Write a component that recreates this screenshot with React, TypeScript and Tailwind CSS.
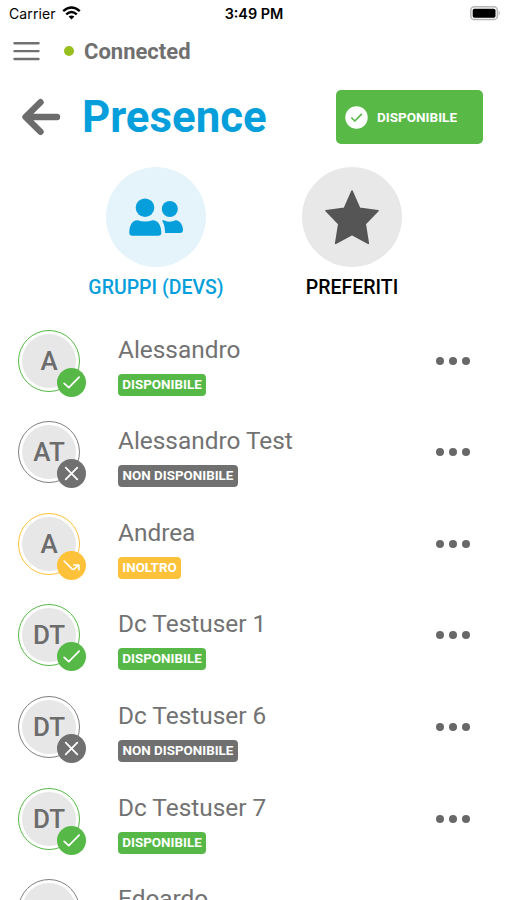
import type { ReactNode } from "react";

type Status = "available" | "unavailable" | "forward";

const contacts: { name: string; initials: string; status: Status }[] = [
  { name: "Alessandro", initials: "A", status: "available" },
  { name: "Alessandro Test", initials: "AT", status: "unavailable" },
  { name: "Andrea", initials: "A", status: "forward" },
  { name: "Dc Testuser 1", initials: "DT", status: "available" },
  { name: "Dc Testuser 6", initials: "DT", status: "unavailable" },
  { name: "Dc Testuser 7", initials: "DT", status: "available" },
  { name: "Edoardo", initials: "E", status: "unavailable" },
];

const statuses: Record<Status, { label: string; bg: string; ring: string; width: string; icon: ReactNode }> = {
  available: {
    label: "DISPONIBILE",
    bg: "bg-[#56b947]",
    ring: "border-[#56b947]",
    width: "w-[88px]",
    icon: <path d="M7.3 15.6 12 20 22.5 9.4" />,
  },
  unavailable: {
    label: "NON DISPONIBILE",
    bg: "bg-[#707070]",
    ring: "border-[#808080]",
    width: "w-[120px]",
    icon: <path d="M8.9 8.9 20.6 20.6M20.6 8.9 8.9 20.6" />,
  },
  forward: {
    label: "INOLTRO",
    bg: "bg-[#fdc13a]",
    ring: "border-[#fdc13a]",
    width: "w-[63px]",
    icon: <path d="M7.2 10.2 15.3 18.2Q16.5 19.3 17.7 18.2L22 14.3M17 14.2H22.3V19.2" strokeWidth="1.6" />,
  },
};

function StatusBar() {
  return (
    <div className="grid h-[27px] grid-cols-3 items-center pl-[9px] pr-[8px] text-black">
      <div className="flex items-center gap-[6px]">
        <span className="font-['Inter',sans-serif] text-[14px] tracking-[0.1px]">Carrier</span>
        <svg className="-mt-[2px]" width="19" height="14" viewBox="0 0 19 14" fill="none" stroke="#000" strokeWidth="2.4">
          <path d="M1.2 5.1Q9.5-2.2 17.8 5.1" />
          <path d="M4.2 8.3Q9.5 3.6 14.8 8.3" />
          <path d="M6.6 10.6Q9.5 8.4 12.4 10.6L9.5 13.5Z" fill="#000" stroke="none" />
        </svg>
      </div>
      <span className="text-center font-['Inter',sans-serif] text-[14.4px] font-semibold">3:49 PM</span>
      <svg className="justify-self-end -mr-[2px]" width="31" height="15" viewBox="0 0 31 15">
        <rect x="0.8" y="0.8" width="26.6" height="12.8" rx="3.6" fill="#fff" stroke="#b5b5b5" strokeWidth="1.5" />
        <rect x="2.7" y="2.7" width="22.8" height="9" rx="1.7" fill="#000" />
        <path d="M28.8 5q2 2.2 0 4.4z" fill="#aaa" />
      </svg>
    </div>
  );
}

function Tab({ label, children, active }: { label: string; children: ReactNode; active?: boolean }) {
  return (
    <div className="flex w-[196px] flex-col items-center">
      <div className={`h-[100px] w-[100px] rounded-full ${active ? "bg-[#e5f4fb]" : "bg-[#e8e8e8]"}`}>{children}</div>
      <span className={`mt-[9px] text-[19.5px] font-medium leading-[24px] ${active ? "text-[#069fdb]" : "text-black"}`}>
        {label}
      </span>
    </div>
  );
}

function Contact({ name, initials, status }: { name: string; initials: string; status: Status }) {
  const s = statuses[status];
  return (
    <li className="flex h-[91.6px] shrink-0 items-center pl-[18px] pr-[37.5px]">
      <div className={`relative h-[62px] w-[62px] shrink-0 rounded-full border-[1.5px] p-[3px] ${s.ring}`}>
        <div className="flex h-full w-full items-center justify-center rounded-full bg-[#e7e7e7] pt-px text-[26px] font-medium text-[#6c6c6c]">
          {initials}
        </div>
        <div className={`absolute -bottom-[6px] -right-[7px] h-[29px] w-[29px] rounded-full ${s.bg}`}>
          <svg
            className="h-full w-full"
            viewBox="0 0 29.5 29.5"
            fill="none"
            stroke="#fff"
            strokeWidth="1.8"
            strokeLinecap="round"
            strokeLinejoin="round"
          >
            {s.icon}
          </svg>
        </div>
      </div>
      <div className="ml-[38px] flex flex-1 flex-col items-start pt-[9px]">
        <span className="text-[24.4px] leading-[30px] text-[#727272]">{name}</span>
        <span
          className={`mt-[9px] flex h-[22px] items-center justify-center rounded-[4px] text-[13.4px] font-bold text-white ${s.width} ${s.bg}`}
        >
          {s.label}
        </span>
      </div>
      <div className="flex gap-[5px]">
        <i className="h-[8px] w-[8px] rounded-full bg-[#686868]" />
        <i className="h-[8px] w-[8px] rounded-full bg-[#686868]" />
        <i className="h-[8px] w-[8px] rounded-full bg-[#686868]" />
      </div>
    </li>
  );
}

export default function App() {
  return (
    <div className="h-[900px] w-[507px] overflow-hidden bg-white font-['Roboto',sans-serif]">
      <StatusBar />

      <header className="flex h-[48px] items-center pl-[13px]">
        <svg width="27" height="20" viewBox="0 0 27 20" stroke="#707070" strokeWidth="2.4" strokeLinecap="round">
          <path d="M1.5 2.2H25.5M1.5 10.1H25.5M1.5 18H25.5" />
        </svg>
        <i className="ml-[24px] h-[10px] w-[10px] rounded-full bg-[#97bf1f]" />
        <span className="ml-[10px] text-[22px] font-bold text-[#707070]">Connected</span>
      </header>

      <div className="flex h-[84px] items-center pl-[21px] pr-[24.5px]">
        <svg width="40" height="38" viewBox="0 0 40 38" fill="none" stroke="#6c6c6c" strokeWidth="6.4" strokeLinecap="round" strokeLinejoin="round">
          <path d="M19.5 4.2 4.5 19 19.5 33.8M5 19H36" />
        </svg>
        <h1 className="ml-[21px] pt-[2px] text-[43.8px] font-bold leading-none text-[#069fdb]">Presence</h1>
        <button className="ml-auto flex h-[54px] w-[147px] items-center rounded-[5px] bg-[#58b947] pl-[9.5px] text-[13.5px] font-bold text-white">
          <svg className="mr-[9px]" width="23" height="23" viewBox="0 0 23 23">
            <circle cx="11.5" cy="11.5" r="11.2" fill="#fff" />
            <path d="M6.8 12 9.8 15 16.3 8.3" fill="none" stroke="#58b947" strokeWidth="1.7" strokeLinecap="round" strokeLinejoin="round" />
          </svg>
          <span className="pt-px">DISPONIBILE</span>
        </button>
      </div>

      <nav className="flex h-[155.8px] pl-[58px] pt-[8px]">
        <Tab label="GRUPPI (DEVS)" active>
          <svg viewBox="0 0 100 100" fill="#069fdb">
            <circle cx="39" cy="40.7" r="9.3" />
            <path d="M31.5 53.2Q39 56 46.5 53.2C52 53 55.3 58.5 55.3 65.5Q55.3 68.7 52.3 68.7H26.3Q23.3 68.7 23.3 65.5C23.3 58.5 26.3 53 31.5 53.2Z" />
            <circle cx="63.8" cy="42" r="8" />
            <path d="M56 53.6Q57.5 53 59 53.7Q64 55.8 69.5 53.3C74 53 77 58.5 77 63Q77 66 74 66H59Q59 58 56 53.6Z" />
          </svg>
        </Tab>
        <Tab label="PREFERITI">
          <svg viewBox="0 0 100 100" fill="#555" stroke="#555" strokeWidth="1.6" strokeLinejoin="round">
            <path d="M50 24 57.6 41.2 76 43.8 63.2 57 66.3 76.4 50 67.6 33.7 76.4 36.8 57 24 43.8 42.4 41.2Z" />
          </svg>
        </Tab>
      </nav>

      <ul className="flex flex-col">
        {contacts.map((c) => (
          <Contact key={c.name} {...c} />
        ))}
      </ul>
    </div>
  );
}
